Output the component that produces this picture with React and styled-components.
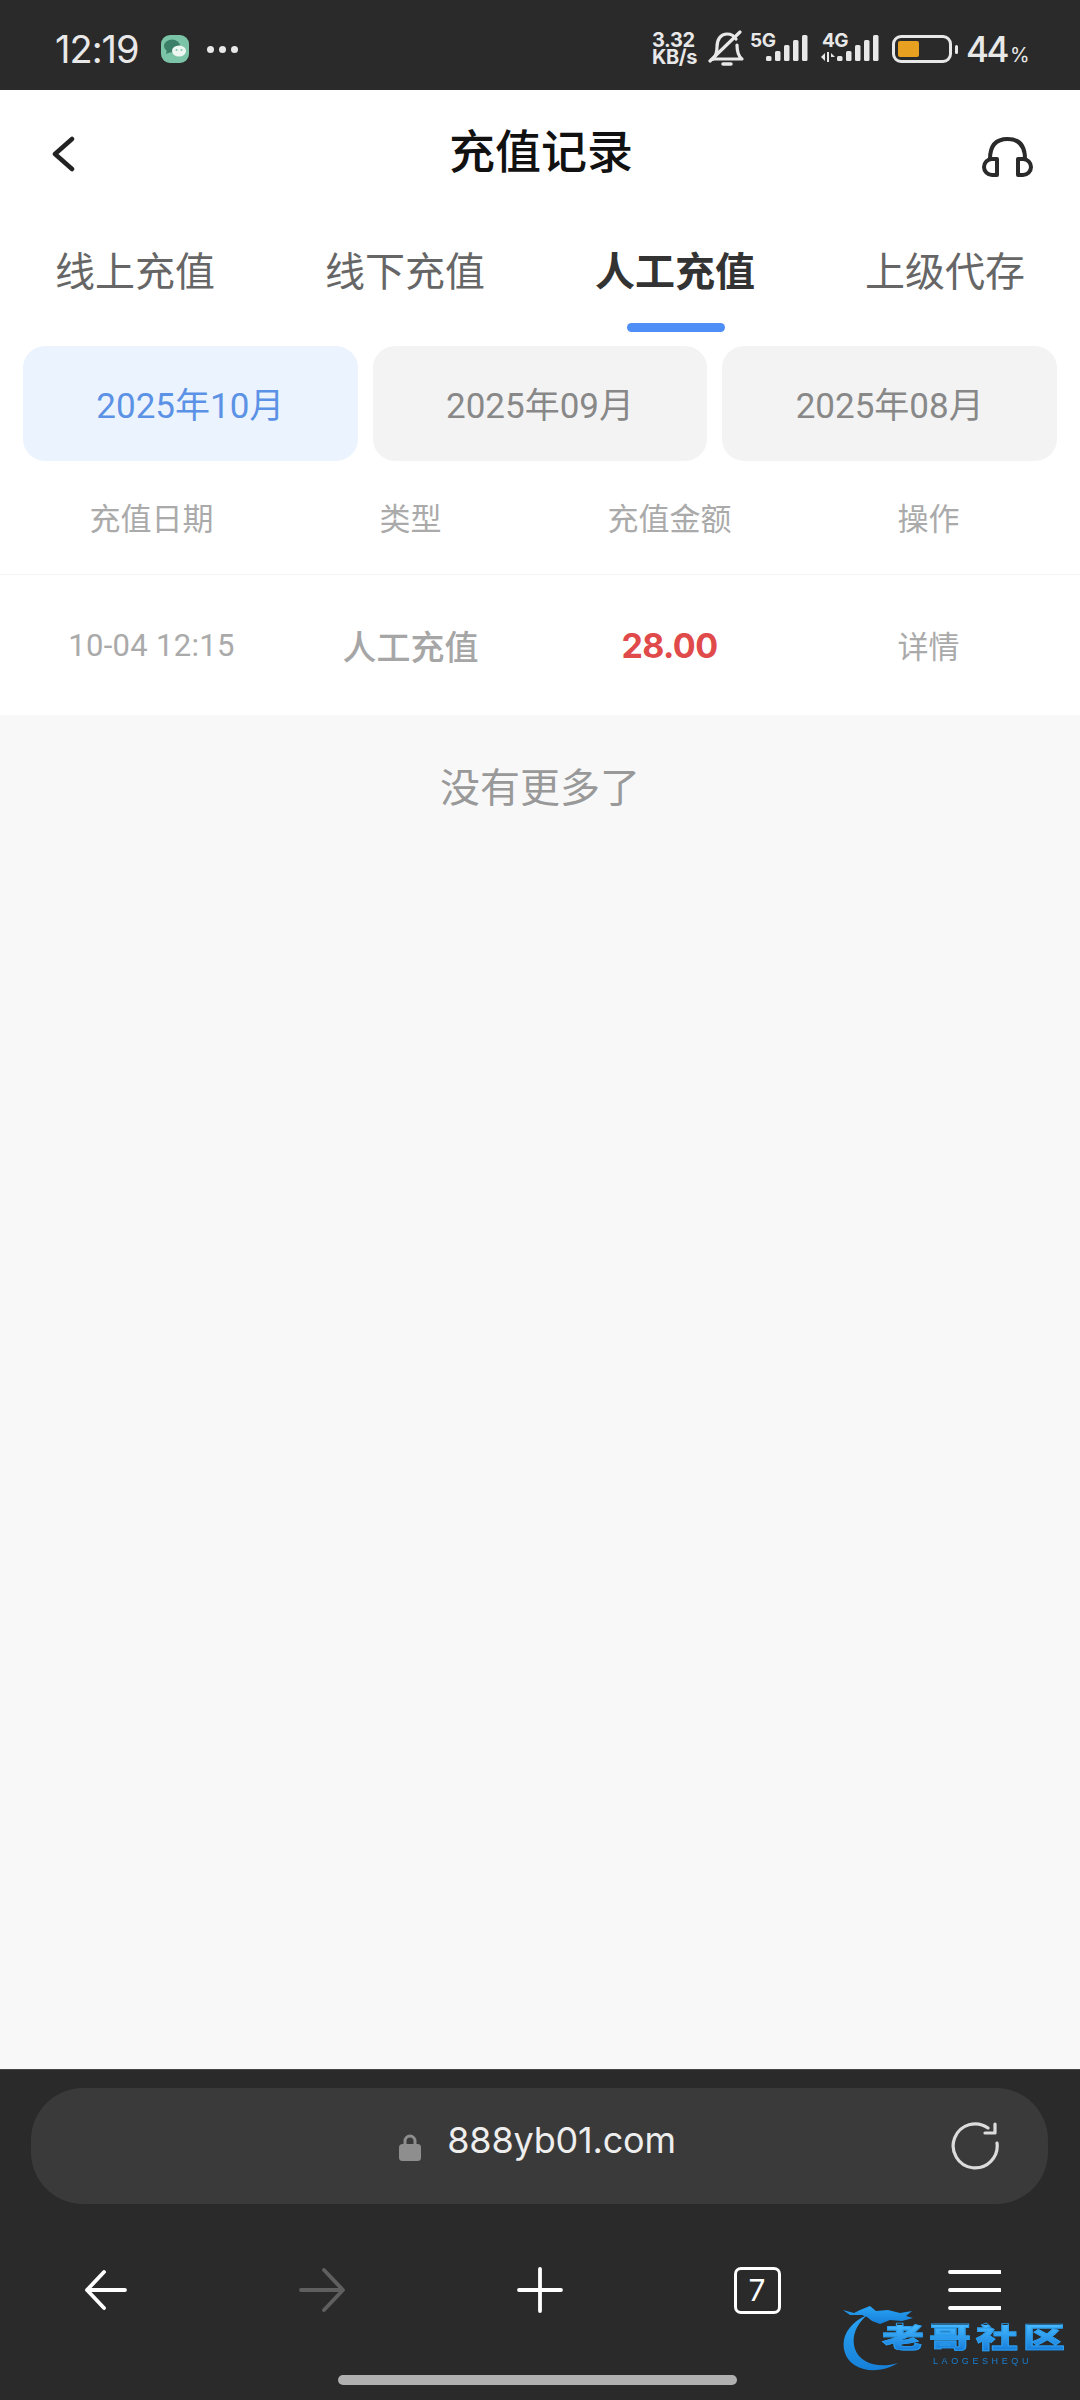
import React from 'react';
import styled, { createGlobalStyle } from 'styled-components';

const GlobalStyle = createGlobalStyle`
    html, body {
        margin: 0;
        padding: 0;
        background: #f8f8f8;
    }

    body {
        font-family: Roboto, "Noto Sans CJK SC", sans-serif;
    }

    * {
        box-sizing: border-box;
    }
`;

const Page = styled.div`
    width: 1080px;
    height: 2400px;
    display: flex;
    flex-direction: column;
    overflow: hidden;
`;

const StatusBar = styled.div`
    height: 90px;
    flex-shrink: 0;
    padding: 8px 55px 0;
    background: #2a2a2a;
    color: #e8e8e8;
    display: flex;
    align-items: center;
    justify-content: space-between;
`;

const StatusGroup = styled.div`
    display: flex;
    align-items: center;
`;

const Clock = styled.span`
    font-family: Inter, sans-serif;
    font-size: 38px;
    font-weight: 400;
    letter-spacing: -1px;
    margin-right: 22px;
`;

const More = styled.span`
    display: flex;
    gap: 5px;
    margin-left: 18px;

    i {
        width: 7px;
        height: 7px;
        border-radius: 50%;
        background: #e8e8e8;
    }
`;

const NetSpeed = styled.div`
    font-family: Inter, sans-serif;
    font-size: 20px;
    font-weight: 700;
    line-height: 17px;
    width: 56px;
    letter-spacing: -0.4px;
`;

const Spaced = styled.div`
    display: flex;
    margin-left: ${props => props.$gap}px;
`;

const Battery = styled.div`
    width: 60px;
    height: 28px;
    border: 3px solid #e8e8e8;
    border-radius: 9px;
    padding: 3px;
    margin-left: 10px;
    position: relative;

    &:after {
        position: absolute;
        content: '';
        right: -9px;
        top: 7px;
        width: 3px;
        height: 9px;
        border-radius: 2px;
        background: #e8e8e8;
    }
`;

const BatteryLevel = styled.div`
    height: 100%;
    border-radius: 2px;
    background: #e8a020;
`;

const BatteryText = styled.span`
    font-family: Inter, sans-serif;
    font-size: 35px;
    font-weight: 500;
    letter-spacing: -2.5px;
    margin-left: 14px;
    width: 59px;
    white-space: nowrap;

    small {
        font-size: 20px;
        font-weight: 400;
        letter-spacing: 0;
        margin-left: 3px;
    }
`;

const TopBar = styled.header`
    height: 126px;
    flex-shrink: 0;
    padding: 0 46px 0 50px;
    background: #fff;
    display: grid;
    grid-template-columns: 1fr auto 1fr;
    align-items: center;
`;

const TopSlot = styled.div`
    display: flex;
    justify-content: ${props => (props.$end ? 'flex-end' : 'flex-start')};
    padding-top: ${props => props.$down}px;
`;

const Title = styled.h1`
    margin: 0 2px 3px 0;
    font-size: 46px;
    font-weight: 500;
    line-height: 1;
    color: #111;
`;

const Panel = styled.div`
    background: #fff;
    flex-shrink: 0;
`;

const Tabs = styled.div`
    display: grid;
    grid-template-columns: repeat(4, 1fr);
    margin-bottom: 14px;
`;

const Tab = styled.div`
    padding-top: 33px;
    display: flex;
    flex-direction: column;
    align-items: center;
    gap: 26px;
    font-size: 40px;
    line-height: 48px;
    font-weight: ${props => (props.$active ? 700 : 400)};
    color: ${props => (props.$active ? '#333' : '#666')};

    &:after {
        content: '';
        width: 98px;
        height: 9px;
        margin-left: 2px;
        border-radius: 5px;
        background: ${props => (props.$active ? '#4f8ef7' : 'transparent')};
    }
`;

const Months = styled.div`
    display: grid;
    grid-template-columns: repeat(3, 1fr);
    gap: 15px;
    padding: 0 23px;
`;

const Month = styled.div`
    height: 115px;
    padding-bottom: 2px;
    border-radius: 22px;
    background: ${props => (props.$active ? '#ebf3fe' : '#f3f3f3')};
    color: ${props => (props.$active ? '#5b92e5' : '#888')};
    font-size: 35px;
    display: flex;
    align-items: center;
    justify-content: center;
`;

const Row = styled.div`
    display: grid;
    grid-template-columns: repeat(4, 1fr);
    padding: 0 22px;
    align-items: center;
    text-align: center;
    height: ${props => props.$height}px;
    border-bottom: ${props => (props.$divided ? '1px solid #f4f4f4' : 'none')};
`;

const HeadCell = styled.div`
    font-size: 31px;
    padding-bottom: 2px;
    color: #aaa;
`;

const DateCell = styled.div`
    font-size: 31px;
    letter-spacing: 0.3px;
    color: #aaa;
`;

const TypeCell = styled.div`
    font-size: 34px;
    font-weight: 500;
    color: #a6a6a6;
`;

const AmountCell = styled.div`
    font-family: Inter, sans-serif;
    font-size: 34px;
    font-weight: 700;
    letter-spacing: -0.6px;
    color: #e04a4a;
`;

const ActionCell = styled.div`
    font-size: 31px;
    padding-bottom: 2px;
    color: #aaa;
`;

const Content = styled.main`
    flex: 1;
    background: #f8f8f8;
`;

const NoMore = styled.div`
    padding-top: 49px;
    text-align: center;
    font-size: 40px;
    line-height: 50px;
    color: #999;
`;

const BrowserBar = styled.footer`
    height: 331px;
    flex-shrink: 0;
    padding: 18px 0 0;
    border-top: 1px solid #454545;
    background: #2a2a2a;
    position: relative;
`;

const Address = styled.div`
    height: 116px;
    margin: 0 32px 0 31px;
    border-radius: 52px;
    background: #3a3a3a;
    position: relative;
    display: flex;
    align-items: center;
    justify-content: center;
    gap: 26px;
    color: #eee;
    font-family: Inter, sans-serif;
    font-size: 36px;
    letter-spacing: -0.2px;
`;

const AddressText = styled.span`
    margin-bottom: 12px;
`;

const LockSlot = styled.div`
    display: flex;
    margin: 2px 0 0 -4px;
`;

const Reload = styled.div`
    position: absolute;
    right: 48px;
    top: 33px;
    display: flex;
`;

const Nav = styled.nav`
    display: flex;
    justify-content: space-between;
    padding: 0 76px;
    margin-top: 56px;
    height: 60px;
`;

const NavItem = styled.div`
    width: 60px;
    height: 60px;
    display: flex;
    align-items: center;
    justify-content: center;
`;

const TabCount = styled.div`
    width: 47px;
    height: 47px;
    border: 3.5px solid #fff;
    border-radius: 7px;
    display: flex;
    align-items: center;
    justify-content: center;
    color: #fff;
    font-family: Inter, sans-serif;
    font-size: 30px;
`;

const HomeIndicator = styled.div`
    width: 399px;
    height: 10px;
    margin: 55px 0 0 338px;
    border-radius: 5px;
    background: #b0b0b0;
`;

const Watermark = styled.div`
    position: absolute;
    right: 17px;
    top: 231px;
    width: 223px;
    height: 76px;
    filter: blur(0.5px);
`;

const WatermarkName = styled.div`
    position: absolute;
    left: 42px;
    top: 24px;
    width: 168px;
    display: flex;
    justify-content: space-between;

    span {
        display: block;
        width: 27px;
        font-size: 28px;
        line-height: 28px;
        font-weight: 900;
        transform: scaleX(1.5);
        transform-origin: left center;
        background: linear-gradient(180deg, #45b8ff, #1277d6);
        -webkit-background-clip: text;
        background-clip: text;
        color: transparent;
        -webkit-text-stroke: 0.8px #2b9cec;
    }
`;

const WatermarkSub = styled.div`
    position: absolute;
    left: 93px;
    top: 55px;
    font-family: "Liberation Sans", sans-serif;
    font-size: 9px;
    line-height: 10px;
    letter-spacing: 3.6px;
    color: #1a7fd0;
`;

const WeChatIcon = () => (
    <svg width="28" height="30" viewBox="0 0 28 30">
        <rect x="0" y="1" width="28" height="28" rx="9" fill="#7cc4a8" />
        <ellipse cx="11" cy="12" rx="8" ry="6.5" fill="#3c7f68" />
        <path d="M6 16l-1 4 5-2z" fill="#3c7f68" />
        <ellipse cx="18" cy="17" rx="7" ry="5.5" fill="#eef6f2" />
        <circle cx="15.5" cy="16" r="1" fill="#7cc4a8" />
        <circle cx="20.5" cy="16" r="1" fill="#7cc4a8" />
    </svg>
);

const BellOffIcon = () => (
    <svg width="38" height="38" viewBox="0 0 38 38" fill="none" stroke="#e8e8e8" strokeWidth="3.2" strokeLinecap="round" strokeLinejoin="round">
        <path d="M5 29c3-3 4-6 4-12C9 9 13 4 19 4c4 0 7 1.500 9 5" />
        <path d="M29 15c0 7 1 11 5 14H5" />
        <path d="M2 31L32 2" />
        <path d="M15 34h8" strokeWidth="3.500" />
    </svg>
);

const barHeights = [5, 10, 16, 21, 26];

const SignalIcon = ({ label, width, offset, arrows }) => (
    <svg width={width} height="34" viewBox={`0 0 ${width} 34`}>
        <text x={arrows ? 2 : 0} y="15" fill="#e8e8e8" fontFamily="Inter, sans-serif" fontSize="19" fontWeight="700" letterSpacing="-0.5">
            {label}
        </text>
        {arrows && <path d="M1 25l4-4v8zM7 20h2v10H7zM11 21l4 4h-4z" fill="#e8e8e8" />}
        {barHeights.map((h, i) => (
            <rect key={i} x={offset + i * 9} y={29 - h} width="5.500" height={h} rx="1.500" fill="#e8e8e8" />
        ))}
    </svg>
);

const BackChevron = () => (
    <svg width="26" height="38" viewBox="0 0 26 38" fill="none" stroke="#222" strokeWidth="4.500" strokeLinecap="round" strokeLinejoin="round">
        <path d="M22 3L5 18l17 15" />
    </svg>
);

const HeadsetIcon = () => (
    <svg width="52" height="42" viewBox="0 0 52 42" fill="none" stroke="#2a2a2a" strokeWidth="4" strokeLinejoin="round" strokeLinecap="round">
        <path d="M8 23C8 10 14 3 25.500 3S43 10 43 23" />
        <path d="M15 23h-5a8 8 0 0 0 0 16h5z" />
        <path d="M36 23h5a8 8 0 0 1 0 16h-5z" />
    </svg>
);

const LockIcon = () => (
    <svg width="22" height="27" viewBox="0 0 22 27">
        <path d="M6 11V7a5 5 0 0 1 10 0v4" fill="none" stroke="#8e8e8e" strokeWidth="3" />
        <rect x="0" y="10" width="22" height="17" rx="3.500" fill="#8e8e8e" />
    </svg>
);

const ReloadIcon = () => (
    <svg width="50" height="50" viewBox="0 0 50 50" fill="none" stroke="#dcdcdc" strokeWidth="3.200" strokeLinecap="round" strokeLinejoin="round">
        <path d="M38 7A22 22 0 1 0 47 22" />
        <path d="M45 3v9H35" />
    </svg>
);

const ArrowIcon = ({ dir, color }) => (
    <svg width="50" height="44" viewBox="0 0 50 44" fill="none" stroke={color} strokeWidth="3.800" strokeLinecap="round" strokeLinejoin="round">
        {dir === 'back'
            ? <path d="M44 22H6M23 4L6 22l17 18" />
            : <path d="M3 22h41M26 2l19 20-19 20" />}
    </svg>
);

const PlusIcon = () => (
    <svg width="46" height="46" viewBox="0 0 46 46" stroke="#fff" strokeWidth="3.800" strokeLinecap="round">
        <path d="M23 2v42M2 23h42" />
    </svg>
);

const MenuIcon = () => (
    <svg width="54" height="42" viewBox="0 0 54 42" stroke="#fff" strokeWidth="3.800" strokeLinecap="round">
        <path d="M3 3h50M3 21h50M3 39h50" />
    </svg>
);

const DragonMark = () => (
    <svg width="80" height="76" viewBox="0 0 80 76">
        <defs>
            <linearGradient id="dragonFill" x1="0" y1="0" x2="0" y2="1">
                <stop offset="0" stopColor="#2aa4f5" />
                <stop offset="1" stopColor="#1680d8" />
            </linearGradient>
        </defs>
        <path d="M27 14C8 22 0 38 5 52c5 16 30 24 53 10-20 6-38 0-43-14-4-12 1-24 12-34z" fill="url(#dragonFill)" />
        <path d="M3 9l11 3 6-3 10-4 6 5 12-1 12 3 12-2-6 5 7 2-11 3-12-1-10 4-8-3-5-4-5-2-12 0z" fill="url(#dragonFill)" />
    </svg>
);

const tabs = ['线上充值', '线下充值', '人工充值', '上级代存'];
const months = ['2025年10月', '2025年09月', '2025年08月'];
const columns = ['充值日期', '类型', '充值金额', '操作'];

const App = () => (
    <Page>
        <GlobalStyle />
        <StatusBar>
            <StatusGroup>
                <Clock>12:19</Clock>
                <WeChatIcon />
                <More><i /><i /><i /></More>
            </StatusGroup>
            <StatusGroup>
                <NetSpeed>3.32<br />KB/s</NetSpeed>
                <BellOffIcon />
                <Spaced $gap={4}><SignalIcon label="5G" width={60} offset={16} /></Spaced>
                <Spaced $gap={10}><SignalIcon label="4G" width={62} offset={17} arrows /></Spaced>
                <Battery><BatteryLevel style={{ width: '44%' }} /></Battery>
                <BatteryText>44<small>%</small></BatteryText>
            </StatusGroup>
        </StatusBar>

        <TopBar>
            <TopSlot $down={4}><BackChevron /></TopSlot>
            <Title>充值记录</Title>
            <TopSlot $end $down={8}><HeadsetIcon /></TopSlot>
        </TopBar>

        <Panel>
            <Tabs>
                {tabs.map(tab => (
                    <Tab key={tab} $active={tab === '人工充值'}>{tab}</Tab>
                ))}
            </Tabs>
            <Months>
                {months.map((month, i) => (
                    <Month key={month} $active={i === 0}>{month}</Month>
                ))}
            </Months>
            <Row $height={114} $divided>
                {columns.map(col => <HeadCell key={col}>{col}</HeadCell>)}
            </Row>
            <Row $height={140}>
                <DateCell>10-04 12:15</DateCell>
                <TypeCell>人工充值</TypeCell>
                <AmountCell>28.00</AmountCell>
                <ActionCell>详情</ActionCell>
            </Row>
        </Panel>

        <Content>
            <NoMore>没有更多了</NoMore>
        </Content>

        <BrowserBar>
            <Address>
                <LockSlot><LockIcon /></LockSlot>
                <AddressText>888yb01.com</AddressText>
                <Reload><ReloadIcon /></Reload>
            </Address>
            <Nav>
                <NavItem><ArrowIcon dir="back" color="#fff" /></NavItem>
                <NavItem><ArrowIcon dir="forward" color="#5f5f5f" /></NavItem>
                <NavItem><PlusIcon /></NavItem>
                <NavItem><TabCount>7</TabCount></NavItem>
                <NavItem><MenuIcon /></NavItem>
            </Nav>
            <HomeIndicator />
            <Watermark>
                <DragonMark />
                <WatermarkName>
                    <span>老</span><span>哥</span><span>社</span><span>区</span>
                </WatermarkName>
                <WatermarkSub>LAOGESHEQU</WatermarkSub>
            </Watermark>
        </BrowserBar>
    </Page>
);

export default App;
